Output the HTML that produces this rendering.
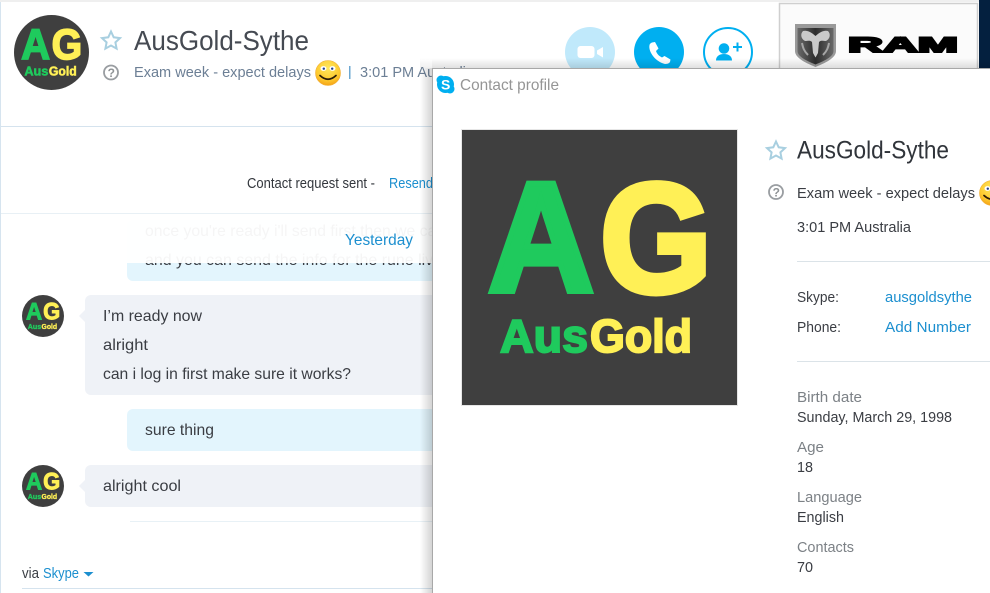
<!DOCTYPE html>
<html>
<head>
<meta charset="utf-8">
<title>AusGold-Sythe</title>
<style>
html,body{margin:0;padding:0;background:#fff;width:990px;height:593px;overflow:hidden}
svg{display:block}
text{font-family:"Liberation Sans",sans-serif;}
.t{font-size:16px;fill:#3a3d43}
.p{font-size:15px;fill:#3a3d43}
.b{fill:#1c8fcf}
.g{font-size:15px;fill:#7c8186}
</style>
</head>
<body>
<svg width="990" height="593" viewBox="0 0 990 593" xmlns="http://www.w3.org/2000/svg">
<defs>
<linearGradient id="sl" x1="0" x2="1" y1="0" y2="0"><stop offset="0" stop-color="#000" stop-opacity="0"/><stop offset="1" stop-color="#000" stop-opacity=".17"/></linearGradient>
<linearGradient id="st" x1="0" x2="0" y1="0" y2="1"><stop offset="0" stop-color="#000" stop-opacity="0"/><stop offset="1" stop-color="#000" stop-opacity=".12"/></linearGradient>
<radialGradient id="sm" cx=".5" cy=".3" r=".75"><stop offset="0" stop-color="#ffe75e"/><stop offset=".65" stop-color="#fdc92e"/><stop offset="1" stop-color="#f39a12"/></radialGradient>
<linearGradient id="sh" x1="0" x2="1" y1="0" y2="0"><stop offset="0" stop-color="#6a6a6a"/><stop offset=".5" stop-color="#2c2c2c"/><stop offset="1" stop-color="#6a6a6a"/></linearGradient>
<clipPath id="c1"><circle cx="51.500" cy="52.500" r="37.500"/></clipPath>
<clipPath id="c2"><circle cx="43" cy="316" r="21"/></clipPath>
<clipPath id="c3"><circle cx="43" cy="486" r="21"/></clipPath>
<clipPath id="left"><rect x="0" y="0" width="432" height="593"/></clipPath>
</defs>

<rect width="990" height="593" fill="#fff"/>
<rect x="0" y="0" width="979" height="2" fill="#efefef"/>
<rect x="0" y="2" width="1" height="591" fill="#d6e4ef"/>

<!-- header avatar -->
<g clip-path="url(#c1)">
<rect x="14" y="15" width="75" height="75" fill="#3f3f3f"/>
<g transform="translate(14 15) scale(.2727) translate(-462 -130)">
<text x="488" y="291" font-size="156" font-weight="700" fill="#1fca5d" stroke="#1fca5d" stroke-width="6" textLength="106" lengthAdjust="spacingAndGlyphs">A</text>
<text x="600" y="292" font-size="156" font-weight="700" fill="#fff056" stroke="#fff056" stroke-width="6" textLength="112" lengthAdjust="spacingAndGlyphs">G</text>
<text x="500" y="352" font-size="46" font-weight="700" fill="#1fca5d" stroke="#1fca5d" stroke-width="2" textLength="88" lengthAdjust="spacingAndGlyphs">Aus</text>
<text x="590" y="352" font-size="46" font-weight="700" fill="#fff056" stroke="#fff056" stroke-width="2" textLength="102" lengthAdjust="spacingAndGlyphs">Gold</text>
</g>
</g>

<!-- header star / question -->
<path d="M111 31.500l2.700 5.800 6.300.8-4.600 4.300 1.200 6.200-5.600-3.100-5.600 3.100 1.200-6.200-4.600-4.300 6.300-.8z" fill="none" stroke="#a8cfe0" stroke-width="2"/>
<circle cx="111" cy="72.500" r="7" fill="none" stroke="#999da1" stroke-width="1.800"/>
<text x="107.600" y="77" font-size="12" font-weight="700" fill="#8f9396">?</text>

<text x="134" y="50" font-size="28" fill="#454a52" textLength="175" lengthAdjust="spacingAndGlyphs">AusGold-Sythe</text>
<text x="134" y="77" font-size="15" fill="#6c7f95" textLength="177" lengthAdjust="spacingAndGlyphs">Exam week - expect delays</text>

<!-- smiley -->
<g>
<circle cx="328" cy="73" r="12.500" fill="url(#sm)" stroke="#f0b038" stroke-width=".6"/>
<ellipse cx="323.500" cy="68.500" rx="3" ry="2.400" fill="#fff"/><ellipse cx="332.500" cy="68.500" rx="3" ry="2.400" fill="#fff"/>
<circle cx="323.800" cy="68.700" r="1.200" fill="#24408a"/><circle cx="332.200" cy="68.700" r="1.200" fill="#24408a"/>
<path d="M320 75.500q8 7.500 16 0" fill="none" stroke="#2b1c08" stroke-width="1.700" stroke-linecap="round"/>
</g>
<rect x="349" y="66" width="1.500" height="13" fill="#6da8d2"/>
<text x="360" y="77" font-size="15" fill="#6c7f95" textLength="114" lengthAdjust="spacingAndGlyphs">3:01 PM Australia</text>

<!-- call buttons -->
<circle cx="590" cy="52" r="25" fill="#c0e9fb"/>
<rect x="577.500" y="46" width="17" height="12" rx="3" fill="#fff"/>
<path d="M597 50.500l6-3.500v10.500l-6-3.500z" fill="#fff"/>
<circle cx="659" cy="52" r="25" fill="#00aff0"/>
<path d="M652 42.500l3-.5 3.500 6.500-2.500 2.500c1 3 3 5 6 6.500l2.500-1.500 6 3.500-.5 2.500c-1 1.500-3 2-5 2C656 62 648 52 649.500 45c.3-1 1-2 2.500-2.500z" fill="#fff"/>
<circle cx="728" cy="52" r="24" fill="#fff" stroke="#00aff0" stroke-width="2"/>
<circle cx="724" cy="48.500" r="5.300" fill="#00aff0"/>
<path d="M716 60.500c0-4.500 3.500-6.500 8-6.500s8 2 8 6.500z" fill="#00aff0"/>
<path d="M737.500 42.500v9M733 47h9" stroke="#00aff0" stroke-width="2" fill="none"/>

<!-- ad -->
<rect x="979" y="0" width="11" height="69" fill="#04203f"/>
<rect x="779.500" y="3.500" width="198" height="66" fill="#fbfbfb" stroke="#cfcfcf" stroke-width="1.500"/>
<path d="M795 24h41v27c0 6-8 11-20.500 16C803 62 795 57 795 51z" fill="#9a9a9a"/>
<path d="M797.500 28h36v23c0 5-7 9-18 13.500C804.500 60 797.500 56 797.500 51z" fill="url(#sh)"/>
<path d="M803 31c4-1 8 1 12.500 5c4.500-4 8.500-6 12.500-5c3 3 2 8-2 10c-3 0-5-1-7 1l-1 11l-2.500 4.500l-2.500-4.500l-1-11c-2-2-4-1-7-1c-4-2-5-7-2-10z" fill="#c9c9c9"/>
<path d="M802 43c1 5 2 8 6 12M829 43c-1 5-2 8-6 12" stroke="#a5a5a5" stroke-width="2" fill="none"/>
<text x="848" y="52" font-size="21" font-weight="700" fill="#000" stroke="#000" stroke-width="2" textLength="110" lengthAdjust="spacingAndGlyphs">RAM</text>

<!-- header bottom line & request bar -->
<rect x="1" y="126" width="431" height="1" fill="#d5e3ee"/>
<g clip-path="url(#left)">
<text x="247" y="188" font-size="15" fill="#33373d" textLength="128" lengthAdjust="spacingAndGlyphs">Contact request sent -</text>
<text x="389" y="188" font-size="15" class="b" textLength="44" lengthAdjust="spacingAndGlyphs">Resend</text>
<rect x="1" y="213" width="431" height="1" fill="#e8f0f5"/>

<!-- messages -->
<rect x="127" y="220" width="330" height="61" rx="6" fill="#e3f5fd"/>
<text x="145" y="236" class="t" textLength="300" lengthAdjust="spacingAndGlyphs">once you're ready i'll send first then we can</text>
<text x="145" y="265" class="t" textLength="297" lengthAdjust="spacingAndGlyphs">and you can send the info for the rune live</text>
<rect x="1" y="214" width="431" height="49" fill="#fff" fill-opacity=".95"/>
<text x="345" y="245" font-size="16" class="b" textLength="68" lengthAdjust="spacingAndGlyphs">Yesterday</text>

<path d="M85 310l-6 6 6 6z" fill="#eff2f7"/>
<rect x="85" y="295" width="360" height="100" rx="6" fill="#eff2f7"/>
<text x="103" y="321" class="t" textLength="99" lengthAdjust="spacingAndGlyphs">I’m ready now</text>
<text x="103" y="350" class="t" textLength="45" lengthAdjust="spacingAndGlyphs">alright</text>
<text x="103" y="379" class="t" textLength="248" lengthAdjust="spacingAndGlyphs">can i log in first make sure it works?</text>

<rect x="127" y="409" width="320" height="42" rx="6" fill="#e3f5fd"/>
<text x="145" y="435" class="t" textLength="69" lengthAdjust="spacingAndGlyphs">sure thing</text>

<path d="M85 480l-6 6 6 6z" fill="#eff2f7"/>
<rect x="85" y="465" width="360" height="42" rx="6" fill="#eff2f7"/>
<text x="103" y="491" class="t" textLength="78" lengthAdjust="spacingAndGlyphs">alright cool</text>

<rect x="130" y="521" width="302" height="1" fill="#e8f1f6"/>

<text x="22" y="578" font-size="14.500" fill="#3a3e44" textLength="17" lengthAdjust="spacingAndGlyphs">via</text>
<text x="43" y="578" font-size="14.500" class="b" textLength="36" lengthAdjust="spacingAndGlyphs">Skype</text>
<path d="M83.500 572h10l-5 4.500z" fill="#1c8fcf"/>
<rect x="22" y="588" width="410" height="1" fill="#d5e3ee"/>
</g>

<!-- chat avatars -->
<g clip-path="url(#c2)">
<rect x="22" y="295" width="42" height="42" fill="#3f3f3f"/>
<g transform="translate(22 295) scale(.1527) translate(-462 -130)">
<text x="488" y="291" font-size="156" font-weight="700" fill="#1fca5d" stroke="#1fca5d" stroke-width="6" textLength="106" lengthAdjust="spacingAndGlyphs">A</text>
<text x="600" y="292" font-size="156" font-weight="700" fill="#fff056" stroke="#fff056" stroke-width="6" textLength="112" lengthAdjust="spacingAndGlyphs">G</text>
<text x="500" y="352" font-size="46" font-weight="700" fill="#1fca5d" stroke="#1fca5d" stroke-width="2" textLength="88" lengthAdjust="spacingAndGlyphs">Aus</text>
<text x="590" y="352" font-size="46" font-weight="700" fill="#fff056" stroke="#fff056" stroke-width="2" textLength="102" lengthAdjust="spacingAndGlyphs">Gold</text>
</g>
</g>
<g clip-path="url(#c3)">
<rect x="22" y="465" width="42" height="42" fill="#3f3f3f"/>
<g transform="translate(22 465) scale(.1527) translate(-462 -130)">
<text x="488" y="291" font-size="156" font-weight="700" fill="#1fca5d" stroke="#1fca5d" stroke-width="6" textLength="106" lengthAdjust="spacingAndGlyphs">A</text>
<text x="600" y="292" font-size="156" font-weight="700" fill="#fff056" stroke="#fff056" stroke-width="6" textLength="112" lengthAdjust="spacingAndGlyphs">G</text>
<text x="500" y="352" font-size="46" font-weight="700" fill="#1fca5d" stroke="#1fca5d" stroke-width="2" textLength="88" lengthAdjust="spacingAndGlyphs">Aus</text>
<text x="590" y="352" font-size="46" font-weight="700" fill="#fff056" stroke="#fff056" stroke-width="2" textLength="102" lengthAdjust="spacingAndGlyphs">Gold</text>
</g>
</g>

<!-- window shadow -->
<rect x="420" y="68" width="12" height="525" fill="url(#sl)"/>
<rect x="432" y="58" width="558" height="10" fill="url(#st)"/>
<rect x="420" y="58" width="12" height="10" fill="url(#st)" opacity=".5"/>

<!-- contact profile window -->
<rect x="432" y="68" width="558" height="525" fill="#fff"/>
<rect x="432" y="68" width="558" height="1" fill="#a8a8a8"/>
<rect x="432" y="68" width="1" height="525" fill="#a8a8a8"/>

<circle cx="445.500" cy="84.500" r="8.500" fill="#00aff0"/>
<circle cx="441" cy="80" r="4.500" fill="#00aff0"/><circle cx="450" cy="89" r="4.500" fill="#00aff0"/>
<text x="441" y="89.500" font-size="14" font-weight="700" fill="#fff">S</text>
<text x="460" y="90" font-size="16" fill="#959595" textLength="99" lengthAdjust="spacingAndGlyphs">Contact profile</text>

<!-- big logo -->
<rect x="461.500" y="129.500" width="276" height="276" fill="#3f3f3f" stroke="#e6e6e6" stroke-width="1"/>
<text x="488" y="291" font-size="156" font-weight="700" fill="#1fca5d" stroke="#1fca5d" stroke-width="6" textLength="106" lengthAdjust="spacingAndGlyphs">A</text>
<text x="600" y="292" font-size="156" font-weight="700" fill="#fff056" stroke="#fff056" stroke-width="6" textLength="112" lengthAdjust="spacingAndGlyphs">G</text>
<text x="500" y="352" font-size="46" font-weight="700" fill="#1fca5d" stroke="#1fca5d" stroke-width="2" textLength="88" lengthAdjust="spacingAndGlyphs">Aus</text>
<text x="590" y="352" font-size="46" font-weight="700" fill="#fff056" stroke="#fff056" stroke-width="2" textLength="102" lengthAdjust="spacingAndGlyphs">Gold</text>

<!-- profile details -->
<path d="M776 141.500l2.700 5.800 6.300.8-4.600 4.300 1.200 6.200-5.600-3.100-5.600 3.100 1.200-6.200-4.600-4.300 6.300-.8z" fill="none" stroke="#a8cfe0" stroke-width="2"/>
<text x="797" y="158.500" font-size="25" fill="#30343a" textLength="152" lengthAdjust="spacingAndGlyphs">AusGold-Sythe</text>
<circle cx="776" cy="192" r="7" fill="none" stroke="#999da1" stroke-width="1.800"/>
<text x="772.600" y="196.500" font-size="12" font-weight="700" fill="#8f9396">?</text>
<text x="797" y="198" class="p" textLength="178" lengthAdjust="spacingAndGlyphs">Exam week - expect delays</text>
<g transform="translate(664 120)">
<circle cx="328" cy="73" r="12.500" fill="url(#sm)" stroke="#f0b038" stroke-width=".6"/>
<ellipse cx="323.500" cy="68.500" rx="3" ry="2.400" fill="#fff"/>
<circle cx="323.800" cy="68.700" r="1.200" fill="#24408a"/>
<path d="M320 75.500q8 7.500 16 0" fill="none" stroke="#2b1c08" stroke-width="1.700" stroke-linecap="round"/>
</g>
<text x="797" y="232" class="p" textLength="114" lengthAdjust="spacingAndGlyphs">3:01 PM Australia</text>
<rect x="797" y="261" width="193" height="1" fill="#dbe3e8"/>
<text x="797" y="302" class="p" textLength="42" lengthAdjust="spacingAndGlyphs">Skype:</text>
<text x="885" y="302" font-size="15" class="b" textLength="87" lengthAdjust="spacingAndGlyphs">ausgoldsythe</text>
<text x="797" y="332" class="p" textLength="44" lengthAdjust="spacingAndGlyphs">Phone:</text>
<text x="885" y="332" font-size="15" class="b" textLength="86" lengthAdjust="spacingAndGlyphs">Add Number</text>
<rect x="797" y="361" width="193" height="1" fill="#dbe3e8"/>
<text x="797" y="402" class="g" textLength="65" lengthAdjust="spacingAndGlyphs">Birth date</text>
<text x="797" y="422" class="p" textLength="155" lengthAdjust="spacingAndGlyphs">Sunday, March 29, 1998</text>
<text x="797" y="452" class="g" textLength="27" lengthAdjust="spacingAndGlyphs">Age</text>
<text x="797" y="472" class="p" textLength="16" lengthAdjust="spacingAndGlyphs">18</text>
<text x="797" y="502" class="g" textLength="65" lengthAdjust="spacingAndGlyphs">Language</text>
<text x="797" y="522" class="p" textLength="47" lengthAdjust="spacingAndGlyphs">English</text>
<text x="797" y="552" class="g" textLength="57" lengthAdjust="spacingAndGlyphs">Contacts</text>
<text x="797" y="572" class="p" textLength="16" lengthAdjust="spacingAndGlyphs">70</text>
</svg>
</body>
</html>
